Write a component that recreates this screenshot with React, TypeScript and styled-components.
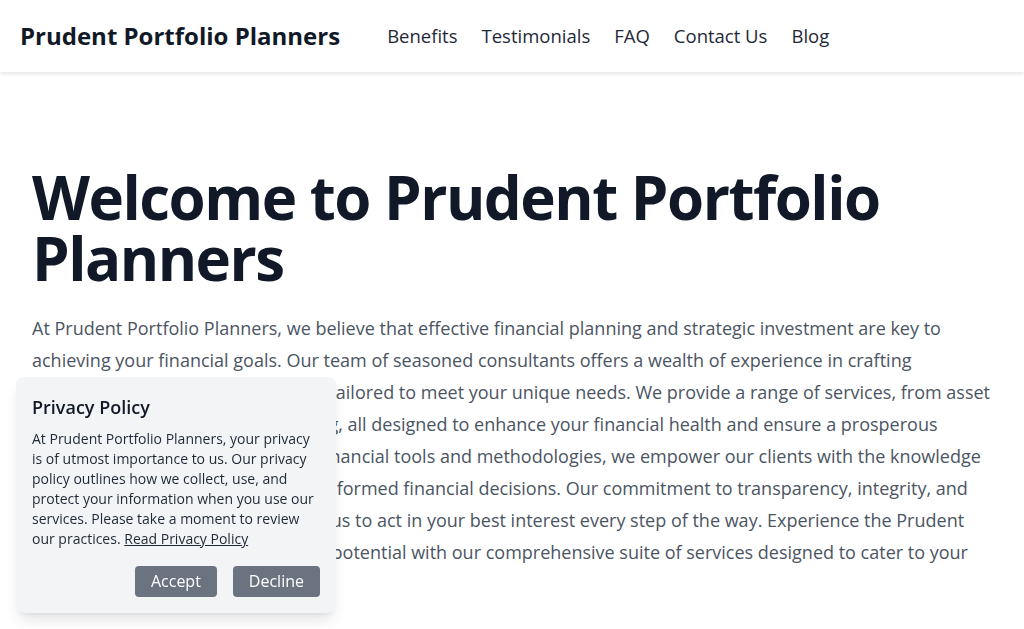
import React from "react";
import styled, { createGlobalStyle } from "styled-components";

const Global = createGlobalStyle`
  html, body { margin: 0; padding: 0; background: #ffffff; }
  body { font-family: "Open Sans", "Noto Sans", sans-serif; color: #111827; }
  * { box-sizing: border-box; }
`;

const Header = styled.header`
  height: 72px;
  display: flex;
  align-items: center;
  padding: 0 20px 2px;
  background: #ffffff;
  box-shadow: 0 2px 4px rgba(0, 0, 0, 0.1);
  position: relative;
`;

const Brand = styled.div`
  font-size: 24px;
  font-weight: 700;
  color: #111827;
  margin-right: 47px;
`;

const Nav = styled.nav`
  display: flex;
  gap: 24px;
`;

const NavLink = styled.a`
  font-size: 18.5px;
  color: #1f2937;
  text-decoration: none;
`;

const Main = styled.main`
  padding: 95px 32px 32px;
`;

const Title = styled.h1`
  margin: 0 0 23px;
  font-size: 60px;
  line-height: 61px;
  font-weight: 700;
  color: #111827;
  letter-spacing: -1.5px;
`;

const Lead = styled.p`
  margin: 0;
  font-size: 18px;
  line-height: 32px;
  color: #4b5563;
`;

const Cookie = styled.div`
  position: fixed;
  left: 16px;
  bottom: 16px;
  width: 320px;
  padding: 16px;
  background: #f3f4f6;
  border-radius: 8px;
  box-shadow: 0 10px 15px -3px rgba(0, 0, 0, 0.1), 0 4px 6px -4px rgba(0, 0, 0, 0.1);
`;

const CookieTitle = styled.h2`
  margin: 0 0 8px;
  font-size: 18px;
  line-height: 28px;
  font-weight: 600;
  color: #111827;
`;

const CookieText = styled.p`
  margin: 0 0 17px;
  font-size: 14px;
  line-height: 20px;
  color: #1f2937;
`;

const CookieLink = styled.a`
  color: #1f2937;
  text-decoration: underline;
`;

const Actions = styled.div`
  display: flex;
  justify-content: flex-end;
  gap: 16px;
`;

const Button = styled.button`
  font-family: inherit;
  font-size: 16px;
  line-height: 23px;
  padding: 4px 16px;
  border: none;
  border-radius: 4px;
  background: #6b7280;
  color: #ffffff;
  cursor: pointer;
`;

export default function App() {
  return (
    <>
      <Global />
      <Header>
        <Brand>Prudent Portfolio Planners</Brand>
        <Nav>
          <NavLink href="#">Benefits</NavLink>
          <NavLink href="#">Testimonials</NavLink>
          <NavLink href="#">FAQ</NavLink>
          <NavLink href="#">Contact Us</NavLink>
          <NavLink href="#">Blog</NavLink>
        </Nav>
      </Header>
      <Main>
        <Title>Welcome to Prudent Portfolio Planners</Title>
        <Lead>
          At Prudent Portfolio Planners, we believe that effective financial planning and strategic
          investment are key to achieving your financial goals. Our team of seasoned consultants
          offers a wealth of experience in crafting personalized investment strategies tailored to
          meet your unique needs. We provide a range of services, from asset management to
          retirement planning, all designed to enhance your financial health and ensure a
          prosperous future. By leveraging cutting-edge financial tools and methodologies, we
          empower our clients with the knowledge and insights necessary for making informed
          financial decisions. Our commitment to transparency, integrity, and excellence in
          clients' success drives us to act in your best interest every step of the way.
          Experience the Prudent Portfolio Planners, and unlock your potential with our
          comprehensive suite of services designed to cater to your unique financial needs.
        </Lead>
      </Main>
      <Cookie>
        <CookieTitle>Privacy Policy</CookieTitle>
        <CookieText>
          At Prudent Portfolio Planners, your privacy is of utmost importance to us. Our privacy
          policy outlines how we collect, use, and protect your information when you use our
          services. Please take a moment to review our practices.{" "}
          <CookieLink href="#">Read Privacy Policy</CookieLink>
        </CookieText>
        <Actions>
          <Button>Accept</Button>
          <Button>Decline</Button>
        </Actions>
      </Cookie>
    </>
  );
}
